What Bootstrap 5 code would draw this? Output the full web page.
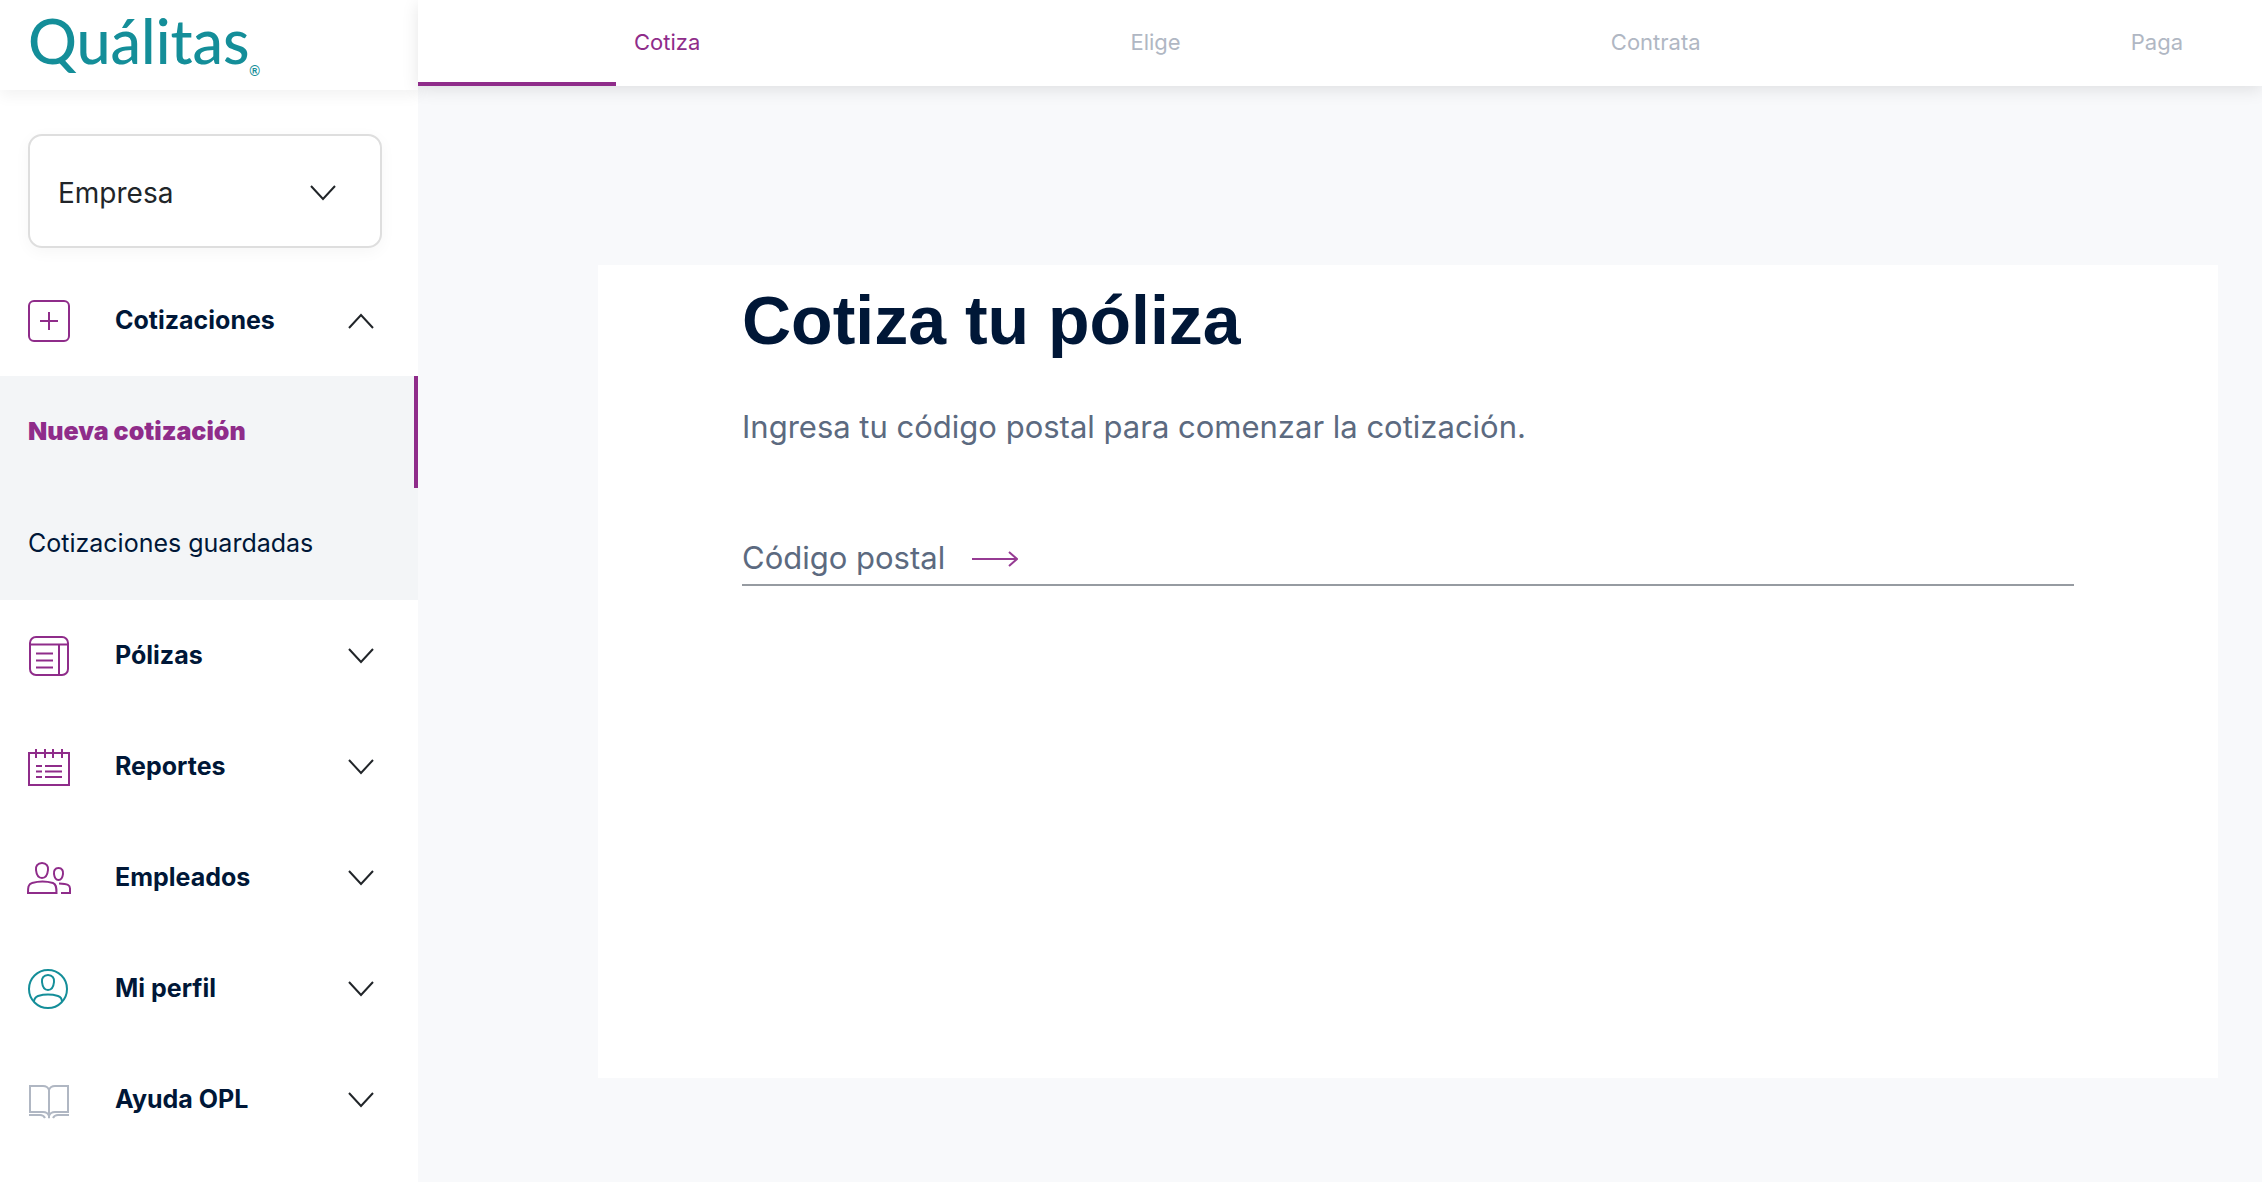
<!DOCTYPE html>
<html lang="es">
<head>
<meta charset="utf-8">
<meta name="viewport" content="width=device-width, initial-scale=1">
<title>Quálitas - Cotiza tu póliza</title>
<link href="https://cdn.jsdelivr.net/npm/bootstrap@5.3.0/dist/css/bootstrap.min.css" rel="stylesheet">
<style>
:root{--plum:#8f2c8a;--teal:#148e99;--navy:#001737;--slate:#5c6a80;--mute:#b0b7c3}
body{font-family:Inter,"Liberation Sans",sans-serif;background:#f8f9fb;color:var(--navy)}
.side{width:418px;background:#fff}
.brand-bar{height:90px;padding:0 28px 8px;box-shadow:0 6px 14px rgba(0,0,0,.05)}
.brand-name{font-family:Lato,sans-serif;font-weight:500;font-size:61px;line-height:82px;color:var(--teal);text-decoration:none}
.brand-reg{font-family:"Liberation Sans",sans-serif;font-size:14px;line-height:14px;font-weight:700;color:var(--teal);padding-bottom:4px}
.picker{padding:44px 36px 17px 28px}
.picker .form-select{height:114px;padding:4px 60px 0 28px;border:2px solid #dedede;border-radius:14px;font-size:28px;color:#212529;box-shadow:0 4px 16px rgba(0,0,0,.04);
 background-image:url("data:image/svg+xml,%3Csvg xmlns='http://www.w3.org/2000/svg' viewBox='0 0 26 16'%3E%3Cpath d='M1 1l12 13L25 1' fill='none' stroke='%23212529' stroke-width='2'/%3E%3C/svg%3E");background-size:26px 16px;background-position:right 44px top 49px}
.menu-row{height:111px;padding:0 44px 0 28px;border:0;background:none;font-size:25px;font-weight:700;color:var(--navy)}
.menu-row .pic{width:42px;height:42px;margin-right:45px;overflow:visible}
.menu-row .chev{width:26px;height:16px}
.chev path{fill:none;stroke:#212529;stroke-width:2}
.pic{fill:none;stroke:var(--plum);stroke-width:2}
.pic-teal{stroke:var(--teal)}
.pic-mute{stroke:var(--mute)}
.submenu{background:#f3f5f7}
.submenu a{height:112px;padding:0 28px;font-size:25px;color:var(--navy);text-decoration:none;border-right:4px solid transparent}
.submenu a.active{color:var(--plum);font-weight:900;border-color:var(--plum)}
.steps{height:86px;padding:0 79px 2px 216px;background:linear-gradient(var(--plum),var(--plum)) left bottom/198px 4px no-repeat #fff;box-shadow:0 4px 16px rgba(0,0,0,.1)}
.steps a{font-size:22px;color:var(--mute);text-decoration:none}
.steps a.active{color:var(--plum)}
.stage{padding:179px 44px 104px 180px}
.quote{background:#fff;padding:15px 144px;min-height:813px}
.quote h1{font-family:"Liberation Sans",sans-serif;font-weight:700;font-size:68px;line-height:80px;margin:0}
.quote p{font-size:31px;line-height:48px;color:var(--slate);margin:43px 0 71px}
.zip{border-bottom:2px solid #969ba1;height:64px;padding-top:8px}
.zip input{width:230px;height:48px;border:0;padding:0;font-size:31px;background:none;color:var(--slate);outline:0}
.zip input::placeholder{color:var(--slate);opacity:1}
.zip button{border:0;background:none;padding:4px 0 0}
</style>
</head>
<body>
<div class="d-flex min-vh-100">
  <aside class="side flex-shrink-0">
    <div class="brand-bar d-flex align-items-center">
      <a class="brand-name" href="#">Quálitas</a><span class="brand-reg align-self-end">®</span>
    </div>
    <div class="picker">
      <select class="form-select" aria-label="Tipo de cuenta"><option>Empresa</option></select>
    </div>
    <nav>
      <button type="button" class="menu-row w-100 d-flex align-items-center">
        <svg class="pic" viewBox="0 0 42 42"><rect x="1" y="1" width="40" height="40" rx="5"/><path d="M12 21h18M21 12v18"/></svg>
        Cotizaciones
        <svg class="chev ms-auto" viewBox="0 0 26 16"><path d="M1 15L13 2l12 13"/></svg>
      </button>
      <div class="submenu">
        <a class="active d-flex align-items-center" href="#">Nueva cotización</a>
        <a class="d-flex align-items-center" href="#">Cotizaciones guardadas</a>
      </div>
      <button type="button" class="menu-row w-100 d-flex align-items-center">
        <svg class="pic" viewBox="0 0 42 42"><rect x="2" y="2" width="38" height="38" rx="6"/><path d="M2 9.500h38M31 10v30M8 18.500h17M8 25.500h17M8 32.500h17"/></svg>
        Pólizas
        <svg class="chev ms-auto" viewBox="0 0 26 16"><path d="M1 1l12 13L25 1"/></svg>
      </button>
      <button type="button" class="menu-row w-100 d-flex align-items-center">
        <svg class="pic" viewBox="0 0 42 42"><path d="M1 7h40v32H1zM8 3v9M17 3v9M25 3v9M34 3v9M8 20h6M17 20h17M8 25.500h6M17 25.500h17M8 31h6M17 31h17"/></svg>
        Reportes
        <svg class="chev ms-auto" viewBox="0 0 26 16"><path d="M1 1l12 13L25 1"/></svg>
      </button>
      <button type="button" class="menu-row w-100 d-flex align-items-center">
        <svg class="pic" viewBox="0 0 42 42"><path d="M14 6c4.500 0 6.500 3.500 6 7-.5 5-2.500 8-6 8s-5.500-3-6-8c-.5-3.500 1.500-7 6-7zM0 36c0-5 0-9 4-10 7-2 14-2 21 0 3 1 3.500 4 3.500 10zM30.500 11c3.500 0 5 3 4.500 6-.5 4-2 6-4.500 6s-4-2-4.500-6c-.5-3 1-6 4.500-6zM31 26.500c9 .5 11 1.500 11 5V36h-9"/></svg>
        Empleados
        <svg class="chev ms-auto" viewBox="0 0 26 16"><path d="M1 1l12 13L25 1"/></svg>
      </button>
      <button type="button" class="menu-row w-100 d-flex align-items-center">
        <svg class="pic pic-teal" viewBox="0 0 42 42"><circle cx="20" cy="21" r="19"/><path d="M20 7c4.500 0 6.500 3.500 6 7-.5 5-2.500 8-6 8s-5.500-3-6-8c-.5-3.500 1.500-7 6-7zM6 34c0-3 1.500-5 4-6 7-2 13-2 20 0 3 1 4 3 4 6"/></svg>
        Mi perfil
        <svg class="chev ms-auto" viewBox="0 0 26 16"><path d="M1 1l12 13L25 1"/></svg>
      </button>
      <button type="button" class="menu-row w-100 d-flex align-items-center">
        <svg class="pic pic-mute" viewBox="0 0 42 42"><path d="M21 11c-1-3-3-4-6-4H2v26h13c3 0 5 1 6 4 1-3 3-4 6-4h13V7H27c-3 0-5 1-6 4zV39M1 36h11c3 0 4 1 5 3M41 36H30c-3 0-4 1-5 3"/></svg>
        Ayuda OPL
        <svg class="chev ms-auto" viewBox="0 0 26 16"><path d="M1 1l12 13L25 1"/></svg>
      </button>
    </nav>
  </aside>
  <div class="flex-grow-1">
    <nav class="steps d-flex justify-content-between align-items-center">
      <a class="active" href="#">Cotiza</a><a href="#">Elige</a><a href="#">Contrata</a><a href="#">Paga</a>
    </nav>
    <main class="stage">
      <section class="quote">
        <h1>Cotiza tu póliza</h1>
        <p>Ingresa tu código postal para comenzar la cotización.</p>
        <form class="zip d-flex align-items-center">
          <input type="text" placeholder="Código postal" aria-label="Código postal">
          <button type="button" aria-label="Continuar"><svg class="d-block" width="46" height="16" viewBox="0 0 46 16" fill="none" stroke="#963b93" stroke-width="2"><path d="M0 8h45M37 1l8 7-8 7"/></svg></button>
        </form>
      </section>
    </main>
  </div>
</div>
<script src="https://cdn.jsdelivr.net/npm/bootstrap@5.3.0/dist/js/bootstrap.bundle.min.js"></script>
</body>
</html>
